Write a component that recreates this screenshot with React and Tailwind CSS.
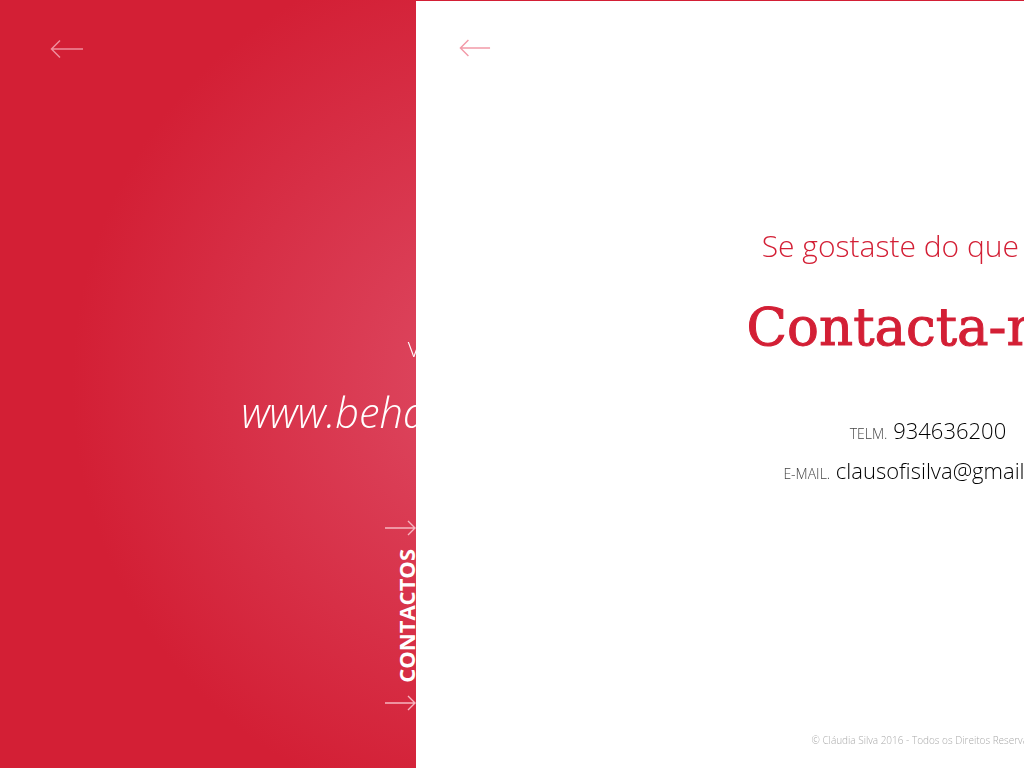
import React from 'react';

const font = "font-['Open_Sans',sans-serif]";

const ArrowLeft = ({ className }) => (
  <svg viewBox="0 0 34 20" className={className} fill="none" stroke="currentColor" strokeWidth="1.5">
    <path d="M1 10H33M10 1.5L1.5 10L10 18.5" />
  </svg>
);

const ArrowRight = ({ className }) => (
  <svg viewBox="0 0 32 16" className={className} fill="none" stroke="currentColor" strokeWidth="1.4">
    <path d="M0 8H30M23 1L30 8L23 15" />
  </svg>
);

const App = () => {
  return (
    <div className={`relative h-screen w-full overflow-hidden ${font}`}>
      {/* pagina de tras, centrada nos 1024px e tapada pelo painel branco */}
      <section className="relative h-full w-[1024px] bg-[radial-gradient(circle_at_center,#de4c65_0,#d31f35_440px)] pt-[39px] text-white">
        <ArrowLeft className="ml-[50px] h-[20px] w-[34px] text-[#f08d9c]" />
        <div className="mt-[270px] text-center will-change-transform">
          <p className="text-[21px] leading-[40px] font-light">Vê mais trabalhos em:</p>
          <p className="mt-[17px] text-[41.5px] leading-[52px] font-light italic">www.behance.net/clausofisilva</p>
        </div>
        <div className="absolute top-[520px] left-[385px] flex flex-col">
          <ArrowRight className="h-[16px] w-[32px] text-[#f6b5bf]" />
          <span className="mt-[13px] ml-[9px] rotate-180 text-[22px] leading-[24px] font-bold [writing-mode:vertical-rl]">CONTACTOS</span>
          <ArrowRight className="mt-[12px] h-[16px] w-[32px] text-[#f6b5bf]" />
        </div>
      </section>

      <section className="absolute top-0 left-[416px] h-full w-[1024px] border-t border-[#d31f35] bg-white">
        <ArrowLeft className="mt-[37px] ml-[43px] h-[20px] w-[32px] text-[#f29aa8]" />
        <div className="text-center will-change-transform">
          <p className="mt-[166px] text-[30px] leading-[44px] font-light text-[#d31f35]">Se gostaste do que viste,</p>
          <h1 className="mt-[27px] font-['DejaVu_Serif',serif] text-[53px] leading-[64px] font-normal text-[#d31f35] [-webkit-text-stroke:1px_#d31f35]">Contacta-me!</h1>
          <p className="mt-[51px] text-[22px] leading-[40px] font-light text-black">
            <span className="text-[14px] leading-none text-[#444]">TELM.</span> 934636200
          </p>
          <p className="text-[22px] leading-[40px] font-light text-black">
            <span className="text-[14px] leading-none text-[#444]">E-MAIL.</span> clausofisilva@gmail.com
          </p>
        </div>
        <p className="absolute right-0 bottom-[20px] left-0 text-center text-[10px] leading-[16px] font-light text-[#aaa] will-change-transform">
          © Cláudia Silva 2016 - Todos os Direitos Reservados
        </p>
      </section>
    </div>
  );
};

export default App;
